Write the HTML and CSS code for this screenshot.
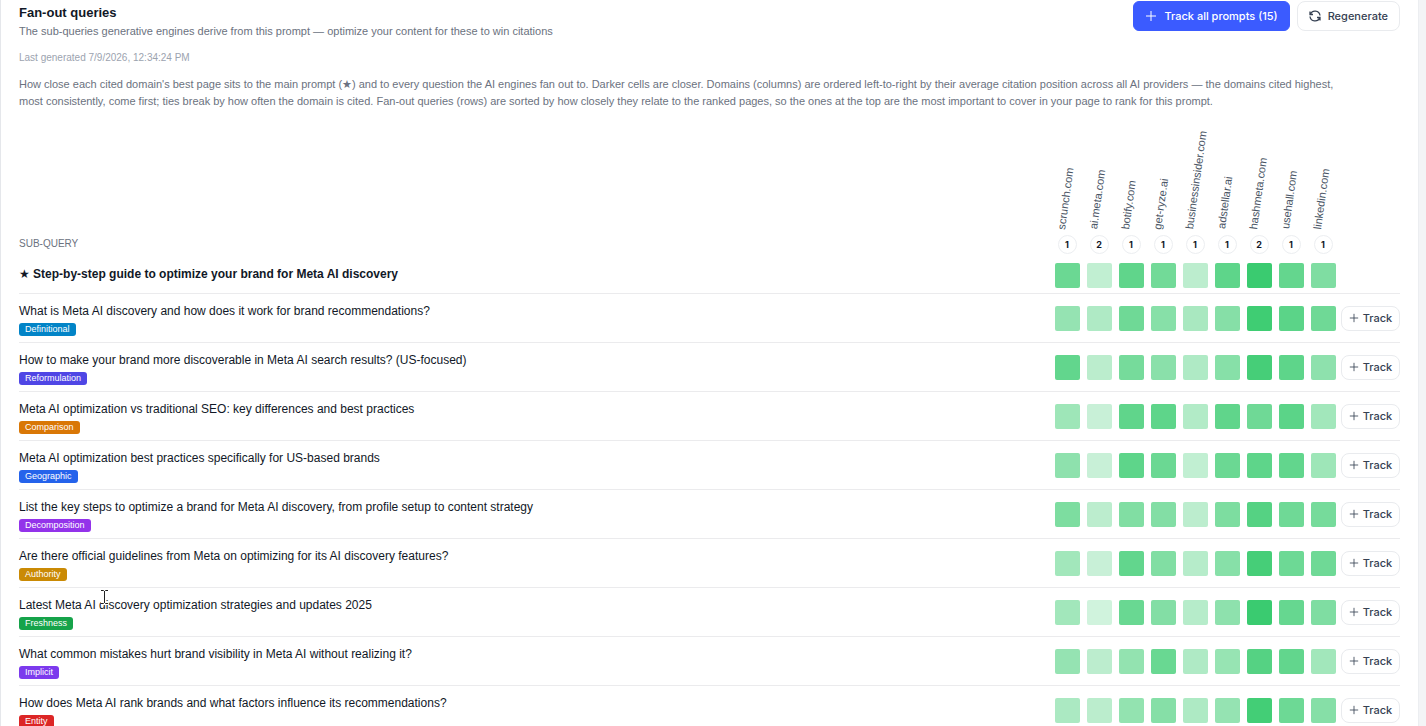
FILE: index.html
```html
<!DOCTYPE html>
<html lang="en">

<head>
    <meta charset="UTF-8">
    <meta name="viewport" content="width=device-width, initial-scale=1.0">
    <title>Fan-out queries</title>
    <link rel="stylesheet" href="styles.css">
</head>

<body>
    <main class="panel">
        <header class="panel-header">
            <div>
                <h1>Fan-out queries</h1>
                <p class="subtitle">The sub-queries generative engines derive from this prompt — optimize your content for these to win citations</p>
            </div>
            <div class="actions">
                <button type="button" class="btn btn-primary">
                    <svg class="icon" viewBox="0 0 12 12"><path d="M6 1v10M1 6h10"/></svg>
                    Track all prompts (15)
                </button>
                <button type="button" class="btn">
                    <svg class="icon icon-refresh" viewBox="0 0 12 12"><path d="M1 1.500v3h3M1.300 4.500A5 5 0 0 1 11 5.500M11 10.500v-3H8M10.700 7.500A5 5 0 0 1 1 6.500"/></svg>
                    Regenerate
                </button>
            </div>
        </header>

        <p class="generated">Last generated 7/9/2026, 12:34:24 PM</p>
        <p class="description">How close each cited domain's best page sits to the main prompt (★) and to every question the AI engines fan out to. Darker cells are closer. Domains (columns) are ordered left-to-right by their average citation position across all AI providers — the domains cited highest, most consistently, come first; ties break by how often the domain is cited. Fan-out queries (rows) are sorted by how closely they relate to the ranked pages, so the ones at the top are the most important to cover in your page to rank for this prompt.</p>

        <table class="matrix">
            <thead>
                <tr id="domains">
                    <th class="query-head" scope="col">SUB-QUERY</th>
                </tr>
            </thead>
            <tbody id="queries"></tbody>
        </table>
    </main>

    <!-- text cursor -->
    <svg class="cursor" viewBox="0 0 9 16"><path class="halo" d="M1 1.500h2.500l1 1 1-1H8M4.500 2v12M1 14.500h2.500l1-1 1 1H8"/><path d="M1 1.500h2.500l1 1 1-1H8M4.500 2v12M1 14.500h2.500l1-1 1 1H8"/></svg>

    <script src="script.js"></script>
</body>

</html>
```

FILE: styles.css
```css
* {
    box-sizing: border-box;
}

body {
    margin: 0;
    height: 100vh;
    overflow: hidden;
    padding-right: 7px;
    background: #f3f4f6;
    color: #111827;
    font-family: "Liberation Sans", "DejaVu Sans", sans-serif;
    font-size: 12px;
    line-height: 18px;
}

h1,
p {
    margin: 0;
}

.panel {
    min-height: 100vh;
    padding: 1px 18px 0;
    background: #fff;
    border-left: 1px solid #e5e7eb;
    border-right: 1px solid #eceef1;
}

.panel-header {
    display: flex;
    justify-content: space-between;
    align-items: flex-start;
}

.panel-header h1 {
    padding-top: 3px;
    font-size: 13px;
    font-weight: 600;
}

.subtitle {
    color: #6b7280;
    font-size: 11px;
}

.actions {
    display: flex;
    gap: 7px;
}

.btn {
    display: inline-flex;
    align-items: center;
    justify-content: center;
    gap: 7px;
    height: 30px;
    padding: 0 11px;
    border: 1px solid #e9ebee;
    border-radius: 8px;
    background: #fff;
    color: #364153;
    font-family: Inter, sans-serif;
    font-size: 11px;
    font-weight: 500;
    white-space: nowrap;
}

.btn-primary {
    background: #3b5bff;
    border-color: #3b5bff;
    border-radius: 6px;
    color: #fff;
}

.icon {
    width: 12px;
    height: 12px;
    fill: none;
    stroke: currentColor;
    stroke-width: 1;
}

.icon-refresh {
    stroke-width: 1.3;
}

.generated {
    margin-top: 9px;
    color: #9ca3af;
    font-size: 10px;
}

.description {
    margin-top: 9px;
    padding-right: 48px;
    color: #6b7280;
    font-size: 11px;
    line-height: 17px;
}

.matrix {
    width: 100%;
    margin-top: 20px;
    border-spacing: 0;
}

.matrix th,
.matrix td {
    padding: 0;
    text-align: left;
}

.matrix .query-head {
    padding-bottom: 4px;
    color: #6b7280;
    font-size: 10px;
    font-weight: 400;
    vertical-align: bottom;
}

.matrix .domain {
    width: 32px;
    min-width: 32px;
    padding: 0 2px 3px 0;
    font-weight: 400;
    vertical-align: bottom;
}

.domain-inner {
    display: flex;
    flex-direction: column;
    align-items: center;
    gap: 6px;
}

.domain-name {
    align-self: flex-start;
    margin-left: 3px;
    writing-mode: vertical-rl;
    transform: rotate(180deg);
    color: #4a5565;
    font-size: 11px;
    line-height: 12px;
}

.domain-name span {
    display: inline-block;
    transform: rotate(8deg);
    transform-origin: top center;
}

.rank {
    width: 19px;
    height: 19px;
    border: 1px solid #eceef1;
    border-radius: 50%;
    font-family: Inter, sans-serif;
    font-size: 9px;
    font-weight: 700;
    line-height: 17px;
    text-align: center;
}

.matrix td {
    border-bottom: 1px solid #ebebed;
}

.matrix .query {
    padding: 8px 0 6px;
    vertical-align: top;
}

.main-query .query {
    font-weight: 600;
    padding-bottom: 10px;
}

.tag {
    display: block;
    width: fit-content;
    margin-top: 3px;
    padding: 0 6px;
    border-radius: 3px;
    color: #fff;
    font-size: 9px;
    line-height: 13px;
}

.definitional { background: #0284c7; }
.reformulation { background: #4f46e5; }
.comparison { background: #d97706; }
.geographic { background: #2563eb; }
.decomposition { background: #9333ea; }
.authority { background: #ca8a04; }
.freshness { background: #16a34a; }
.implicit { background: #7c3aed; }
.entity { background: #dc2626; }

.matrix .score {
    padding-left: 3px;
}

.score div {
    width: 25px;
    height: 25px;
    border-radius: 2px;
}

.matrix .track {
    width: 60px;
    padding-left: 1px;
}

.btn-track {
    display: flex;
    width: 59px;
    height: 25px;
    padding: 0;
    gap: 4px;
}

.btn-track .icon {
    width: 10px;
    height: 10px;
}

.cursor {
    position: absolute;
    left: 100px;
    top: 589px;
    width: 9px;
    height: 16px;
    fill: none;
    stroke: #222;
    stroke-width: 1;
    pointer-events: none;
}

.cursor .halo {
    stroke: #fff;
    stroke-width: 3;
}
```

FILE: script.js
```js
const domains = [
    ['scrunch.com', 1],
    ['ai.meta.com', 2],
    ['botify.com', 1],
    ['get-ryze.ai', 1],
    ['businessinsider.com', 1],
    ['adstellar.ai', 1],
    ['hashmeta.com', 2],
    ['usehall.com', 1],
    ['linkedin.com', 1]
];

// query, type, closeness per domain
const queries = [
    ['★ Step-by-step guide to optimize your brand for Meta AI discovery', '', [.67, .28, .72, .64, .30, .73, .89, .70, .58]],
    ['What is Meta AI discovery and how does it work for brand recommendations?', 'Definitional', [.48, .36, .65, .54, .39, .55, .87, .74, .65]],
    ['How to make your brand more discoverable in Meta AI search results? (US-focused)', 'Reformulation', [.71, .31, .62, .53, .36, .54, .84, .73, .51]],
    ['Meta AI optimization vs traditional SEO: key differences and best practices', 'Comparison', [.44, .25, .72, .73, .35, .72, .65, .74, .42]],
    ['Meta AI optimization best practices specifically for US-based brands', 'Geographic', [.51, .25, .73, .67, .28, .67, .73, .71, .44]],
    ['List the key steps to optimize a brand for Meta AI discovery, from profile setup to content strategy', 'Decomposition', [.59, .30, .57, .56, .30, .59, .77, .65, .62]],
    ['Are there official guidelines from Meta on optimizing for its AI discovery features?', 'Authority', [.42, .25, .71, .57, .33, .54, .84, .66, .65]],
    ['Latest Meta AI discovery optimization strategies and updates 2025', 'Freshness', [.42, .21, .68, .56, .33, .51, .89, .69, .58]],
    ['What common mistakes hurt brand visibility in Meta AI without realizing it?', 'Implicit', [.48, .30, .49, .68, .36, .47, .77, .71, .42]],
    ['How does Meta AI rank brands and what factors influence its recommendations?', 'Entity', [.38, .31, .49, .55, .37, .48, .85, .66, .55]]
];

const plus = '<svg class="icon" viewBox="0 0 12 12"><path d="M6 1v10M1 6h10"/></svg>';

document.getElementById('domains').innerHTML += domains.map(([name, rank]) => `
    <th class="domain" scope="col">
        <div class="domain-inner">
            <div class="domain-name"><span>${name}</span></div>
            <div class="rank">${rank}</div>
        </div>
    </th>`).join('');

document.getElementById('queries').innerHTML = queries.map(([text, type, scores]) => `
    <tr class="${type ? '' : 'main-query'}">
        <td class="query">${text}${type ? `<span class="tag ${type.toLowerCase()}">${type}</span>` : ''}</td>
        ${scores.map(s => `<td class="score"><div style="background: rgba(34, 197, 94, ${s})"></div></td>`).join('')}
        <td class="track">${type ? `<button type="button" class="btn btn-track">${plus}Track</button>` : ''}</td>
    </tr>`).join('');
```
